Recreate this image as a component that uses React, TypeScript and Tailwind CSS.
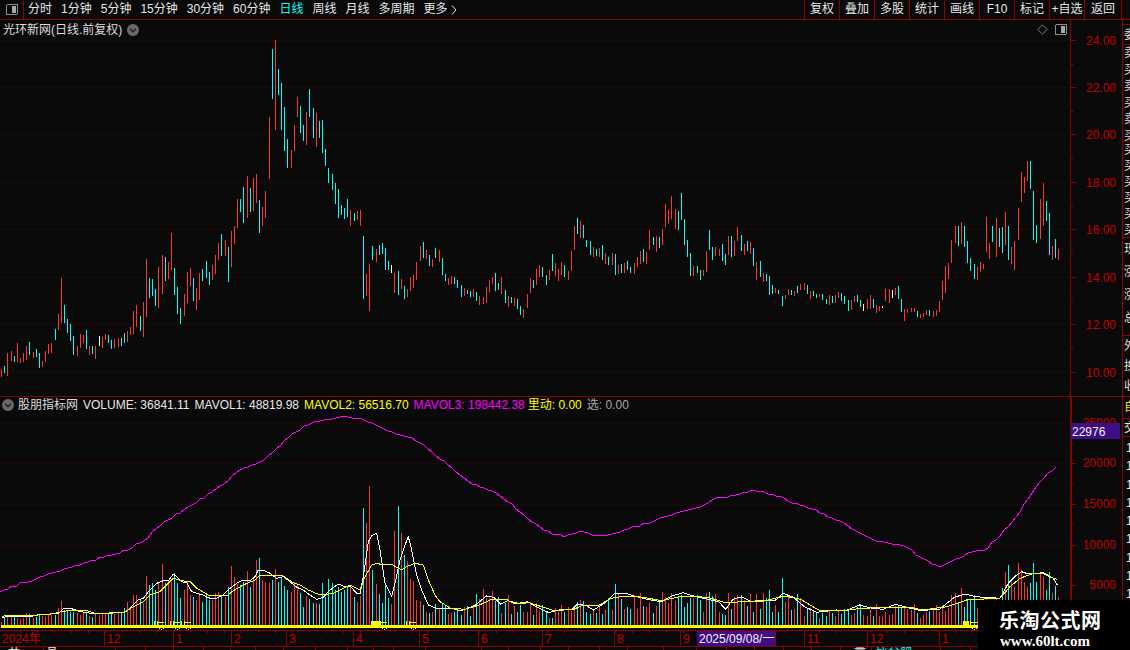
const RED = "#ff3434";
const CYAN = "#00ffff";
const AXIS = "#8c0000";
const LABEL = "#c40000";
const DOT = "#6a0000";

const candleSets: [number, number, string][] = [
  [0, 230, "4 418 441 r;13 408 429 c;22 369 438 r;34 363 393 r;43 378 396 c;52 339 396 r;61 384 399 r;70 369 396 r;79 348 390 r;88 336 375 c;100 366 384 r;109 357 381 c;118 369 414 c;127 393 411 r;136 363 396 r;145 342 372 r;154 339 369 r;166 297 330 c;175 252 300 r;184 144 279 r;193 225 279 c;202 267 309 c;211 282 333 c;220 318 375 c;232 348 378 r;241 312 354 r;250 315 339 r;259 300 357 c;268 348 375 r;277 348 372 c;286 348 387 r;298 318 348 w;307 321 354 r;316 312 330 r;325 315 339 c;334 330 357 c;343 327 354 r;355 324 351 r;364 324 348 c;373 309 339 c;382 303 336 r;391 291 315 r;400 243 312 r;409 225 291 r;421 258 303 c;430 216 321 r;439 87 261 r;448 144 204 c;457 147 198 c;466 177 228 c;475 111 234 r;487 75 192 r;496 81 153 c;505 96 147 r;514 9 120 r;523 114 195 c;532 171 252 c;541 234 282 c;553 192 258 r;562 126 219 r;571 114 168 r;580 144 213 c;589 174 240 r;598 129 210 r;607 117 153 c;619 93 144 c;628 126 165 c;637 105 150 r;646 75 132 r;655 39 90 r;664 12 78 c;676 30 78 r;685 51 156 c;694 3 111 r"],
  [130, 30, "313 588 642 r;322 507 594 r;331 507 546 c;340 471 579 c;352 438 564 r;361 474 546 c;370 444 543 r;379 432 519 r;388 510 609 c;397 531 588 r;406 483 564 r;418 261 447 r;427 57 207 c;436 30 300 r;445 117 195 c;454 159 300 c;463 231 363 c;472 327 414 c;484 360 414 r;493 285 363 r;502 201 261 r;511 228 309 c;520 285 333 c;529 246 345 r;538 177 261 c;550 234 324 c;559 249 351 r;568 273 324 c;577 270 369 c;586 357 408 c;595 414 459 c;607 432 480 c;616 459 522 c;625 477 564 c;634 525 555 c;643 534 567 c;652 507 561 c;661 540 588 r;673 549 573 c;682 543 570 r;691 540 588 r;700 618 807 c;709 732 798 r;718 702 843 r;727 648 690 c;739 657 696 r;748 645 675 c;757 639 672 c;766 654 720 c;775 693 720 c;784 705 729 w;793 729 789 r;805 723 795 c"],
  [400, 190, "4 267 297 r;13 288 327 c;22 297 321 r;31 261 303 r;40 255 294 r;49 216 270 r;61 168 213 r;70 156 204 c;79 180 207 r;88 195 228 c;97 207 231 r;106 174 204 c;118 180 216 r;127 204 255 c;136 252 273 c;145 264 285 r;154 258 282 r;163 261 282 c;172 270 294 c;184 285 321 c;193 294 318 r;202 300 312 c;211 303 321 c;220 297 321 r;229 306 333 c;238 318 345 r;250 321 342 r;259 291 339 r;268 270 306 r;277 261 282 r;286 249 303 c;295 279 300 c;304 261 312 r;316 300 339 c;325 318 351 r;334 321 339 c;343 324 348 r;352 327 357 c;361 348 375 c;370 357 384 r;382 312 354 r;391 264 309 r;400 270 294 c;409 237 285 r;418 225 261 r;427 231 261 c;439 255 285 c;448 240 270 r;457 192 243 c;466 219 258 r;475 237 273 r;484 216 255 r;493 225 261 c;505 243 270 r;514 183 243 r;523 108 180 r;532 84 132 c;541 93 144 r;550 105 144 c;559 150 171 c;571 153 195 c;580 171 201 r;589 177 198 c;598 174 201 r;607 165 210 c;616 189 222 r;625 201 225 c;637 189 225 r;646 192 255 c;655 225 252 r;664 222 249 c;673 219 249 r;682 213 240 c;691 231 249 c;703 219 252 r;712 201 231 r;721 183 222 r;730 177 216 c;739 186 222 r;748 120 180 r;760 141 165 c;769 138 186 r;778 141 174 c;787 117 165 r;796 42 111 r;805 60 102 r;814 18 87 r;826 57 117 r;835 63 120 c;844 9 90 c;853 87 165 c;862 150 201 c;871 189 258 c;880 228 258 r;892 228 249 c;901 240 270 c;910 240 258 r;919 183 246 r;928 120 180 c;937 171 210 c;946 171 198 r;958 177 198 r;967 162 213 c;976 192 225 c;985 138 195 r;994 138 201 c;1003 153 198 r;1012 111 153 r"],
  [740, 150, "4 255 303 c;13 282 315 r;22 273 303 c;31 276 312 r;40 294 348 c;49 336 390 r;61 333 381 c;70 369 396 r;79 372 393 c;88 378 435 c;97 405 432 c;106 414 429 r;115 420 432 c;127 438 468 c;136 435 447 r;145 417 435 r;154 420 435 c;163 423 438 r;172 408 429 c;181 402 420 r;193 399 420 r;202 405 432 c;211 423 447 r;220 423 438 c;229 432 444 c;238 432 441 r;247 432 450 c;259 447 462 c;268 435 465 r;277 438 459 c;286 435 459 r;295 426 444 r;304 429 453 c;313 438 462 c;325 450 483 c;334 450 480 r;343 438 456 r;352 435 456 c;361 450 471 c;370 462 483 w;382 447 477 r;391 435 477 r;400 447 474 c;409 465 489 r;418 468 483 r;427 468 474 w;436 417 453 r;448 417 459 r;457 420 444 w;466 414 435 r;475 408 447 c;484 447 486 c;493 477 513 r;502 477 489 r;514 474 486 r;523 474 486 r;532 483 501 c;541 492 504 r;550 489 501 r;559 480 495 r;568 480 498 c;580 483 501 r;589 480 498 r;598 453 486 r;607 393 450 r;616 348 429 r;625 339 387 r;634 270 339 r;646 228 279 r;655 228 288 c;664 216 282 r;673 228 291 c;682 273 339 c;691 324 363 c;703 342 387 c;712 351 390 r;721 336 366 r;730 342 357 r;739 201 306 r;748 279 327 r;757 228 276 c;769 204 321 r;778 234 291 c;787 231 309 c;796 186 285 r;805 228 330 c;814 291 342 r;823 273 360 r;835 174 270 r;844 66 156 r;853 81 129 r;862 33 93 r;871 33 117 c;880 123 270 c;889 225 279 c;901 147 267 r;910 99 228 r;919 153 213 c;928 189 315 c;937 288 330 r;946 267 324 c;955 297 330 r"],
];

type Bar = { x: number; y1: number; y2: number; c: string };
const bars: Bar[] = candleSets.flatMap(([ox, oy, s]) =>
  s.split(";").map((row) => {
    const [zx, a, b, c] = row.split(" ");
    return { x: ox + Math.floor(+zx / 3), y1: oy + +a / 3, y2: oy + +b / 3, c };
  }),
);

const conv = (pts: number[], ox: number, oy: number, sx = 3, sy = 3) => {
  const out: [number, number][] = [];
  for (let i = 0; i < pts.length; i += 2) out.push([ox + pts[i] / sx, oy + pts[i + 1] / sy]);
  return out;
};

const white = [
  ...conv([5,172,50,168,100,168,120,163,150,162,175,160,190,147,215,146,235,153,260,158,285,161,310,160,370,158,385,150,400,135,415,120,430,115,445,95,470,70,490,62,505,62,520,42,530,50,545,65,560,68,575,95,590,100,610,105,630,115,650,115,670,105,690,85,710,70,730,60,750,62,765,50,775,30,790,30,810,40,830,55,850,50,870,65,890,82,910,90,930,105,950,118,970,112,990,90,1015,72,1035,80], 0, 560),
  ...conv([30,348,50,370,60,372,70,320,85,215,95,197,110,190,120,240,135,340,155,380,165,340,180,270,195,225,205,200,215,240,230,315,245,360,265,405,290,415], 340, 470),
  ...conv([30,145,60,152,100,135,130,108,150,112,170,132,190,122,220,130,245,125,270,140,305,158,340,148,370,148,385,132,410,137,430,150,460,130,490,100,520,100,550,110,590,120,620,125,650,108,680,98,710,108,750,118,780,125,800,148,820,118,845,110,870,125,900,120,940,120,960,100,990,112,1020,140,1055,157,1110,150,1135,152,1175,135,1210,145,1240,148,1275,133,1300,140,1345,152,1400,147,1440,112,1470,102,1500,110], 440, 560, 2.8),
  ...conv([0,655,25,610,50,585,65,575,85,582,110,580,130,578,160,595,172,615], 1000, 380),
];
const yellow = [
  ...conv([5,170,20,166,100,166,150,163,185,155,205,152,260,152,285,160,370,158,400,140,430,125,450,105,480,95,500,75,520,55,545,62,570,65,590,85,625,105,680,108,700,92,730,75,765,60,780,45,845,45,860,55,880,68,900,75,925,90,960,105,1000,100,1020,90], 0, 560),
  ...conv([30,345,60,360,75,320,95,285,110,280,130,285,155,283,175,295,185,300,200,290,225,280,250,285,265,330,285,375,300,395], 340, 470),
  ...conv([30,145,70,148,110,135,140,120,185,118,210,132,250,128,290,142,320,152,375,148,400,135,440,138,480,115,520,108,570,112,620,122,680,108,750,112,800,128,850,125,900,125,965,108,1010,118,1060,150,1130,152,1180,145,1260,142,1320,142,1350,150,1420,140,1480,118,1505,118], 440, 560, 2.8),
  ...conv([0,655,30,620,60,595,100,580,130,580,150,592,172,598], 1000, 380),
];
const magentaKeys: [number, number][] = [[0,592],[20,584],[40,578],[60,570],[75,566],[100,558],[130,549],[145,540],[160,525],[180,512],[200,500],[220,487],[240,470],[265,460],[285,440],[305,425],[325,419],[345,417],[365,420],[385,430],[410,437],[430,450],[450,467],[470,483],[490,490],[510,503],[530,520],[550,533],[565,536],[580,530],[590,534],[610,535],[630,528],[650,522],[680,512],[700,507],[715,499],[730,496],[755,490],[775,495],[800,505],[820,512],[840,522],[860,532],[880,542],[905,546],[925,560],[940,567],[955,560],[970,552],[985,550],[1000,535],[1010,524],[1017,517],[1025,503],[1033,491],[1043,478],[1050,472],[1057,465]];

const pl = (p: [number, number][]) => p.map(([x, y]) => `${x.toFixed(1)},${y.toFixed(1)}`).join(" ");
const interp = (p: [number, number][], x: number) => {
  for (let i = 1; i < p.length; i++) {
    if (p[i][0] >= x) {
      const [a, b] = p[i - 1];
      const [c, d] = p[i];
      return b + ((d - b) * (x - a)) / (c - a || 1);
    }
  }
  return p[p.length - 1][1];
};

const vols = new Map<number, number>();
const addV = (pts: number[], ox: number, oy: number, sx = 3, sy = 3) => {
  for (let i = 0; i < pts.length; i += 2) vols.set(ox + Math.floor(pts[i] / sx), oy + pts[i + 1] / sy);
};
addV([13,175,22,170,34,168,43,170,52,175,61,177,70,175,79,160,88,163,100,175,109,170,118,162,127,168,136,172,145,165,154,165,166,165,175,145,184,123,193,150,202,152,211,155,220,155,232,160,241,165,250,158,259,155,268,168,277,172,286,162,298,165,307,160,316,160,325,160,334,162,343,163,355,160,364,155,373,145,382,125,391,140,400,105,409,105,421,118,430,130,439,48,448,75,457,70,466,90,475,65,487,12,496,70,505,60,514,65,523,40,532,70,541,115,553,90,562,65,571,105,580,110,589,120,598,100,607,125,619,100,628,120,637,120,646,100,655,95,664,105,676,110,685,80,694,18,703,50,712,72,721,75,730,65,742,32,751,80,760,55,769,0,778,-6,787,60,796,65,805,70,817,60,826,28,835,65,844,50,853,78,862,90,874,95,883,65,892,75,901,100,910,140,919,108,928,118,940,130,949,130,958,132,967,68,976,112,985,58,994,70,1003,90,1015,80,1024,95,1033,90,1042,80,1051,75], 0, 560);
addV([42,380,52,395,61,378,70,115,79,160,88,48,97,300,109,342,118,372,127,400,136,345,145,385,154,402,163,183,175,108,184,190,193,255,202,272,211,328,220,332,229,390,241,393,250,405,259,425,268,430,277,425,286,402,295,418,307,402,316,408,325,432,334,428,343,425,352,420], 340, 470);
addV([5,625,15,575,25,555,35,600,45,620,55,548,65,570,72,605,80,620,90,610,100,548,110,605,120,575,130,590,138,630,148,575,157,640,175,650], 1000, 380);
addV([101,102,121,87,491,72,622,97,805,100,922,90,958,55,1440,100,1460,84], 440, 560, 2.8);

let seed = 17;
const rnd = () => {
  seed = (seed * 16807) % 2147483647;
  return seed / 2147483647;
};
const volumes = bars.map((b) => {
  const known = vols.get(b.x) ?? vols.get(b.x - 1) ?? vols.get(b.x + 1);
  const level = 626 - interp(white, b.x);
  return {
    x: b.x,
    top: known ?? 626 - level * (0.5 + rnd() * 0.8),
    color: b.c === "c" ? CYAN : RED,
  };
});

const magenta: [number, number][] = [];
for (let x = 0; x <= 1057; x += 4) {
  magenta.push([x, Math.round(interp(magentaKeys, x) + (rnd() - 0.5) * 2)]);
}

const priceLabels: [string, number][] = [["24.00", 40], ["22.00", 87], ["20.00", 134.5], ["18.00", 182], ["16.00", 229], ["14.00", 277], ["12.00", 324.5], ["10.00", 372]];
const volLabels: [string, number][] = [["25000", 423], ["20000", 463.5], ["15000", 504.5], ["10000", 545], ["5000", 585.5]];
const barColor = (c: string) => (c === "r" ? RED : c === "c" ? CYAN : "#ffffff");

function SplitIcon({ className }: { className: string }) {
  return (
    <svg viewBox="0 0 12 11" className={className} shapeRendering="crispEdges">
      <rect x="0.5" y="0.5" width="11" height="10" rx="1.5" fill="#0a0a0a" stroke="#8e8e8e" />
      <rect x="6" y="2" width="4" height="7" fill="#a8a8a8" />
    </svg>
  );
}

function Chevron({ className }: { className: string }) {
  return (
    <svg viewBox="0 0 12 12" className={className}>
      <circle cx="6" cy="6" r="6" fill="#6a6a6a" />
      <path d="M3 4.8 6 7.8 9 4.8" fill="none" stroke="#1b1b1b" strokeWidth="1.3" />
    </svg>
  );
}

function PriceChart() {
  return (
    <svg viewBox="0 20 1122 376" className="block w-[1122px] h-[376px]">
      {priceLabels.map(([, y]) => (
        <line key={y} x1="1" x2="1067" y1={Math.floor(y) + 0.5} y2={Math.floor(y) + 0.5} stroke={DOT} strokeDasharray="1 3" />
      ))}
      <g shapeRendering="crispEdges">
        {bars.map((b, i) => (
          <rect key={i} x={b.x} y={Math.round(b.y1)} width="1" height={Math.max(2, Math.round(b.y2 - b.y1))} fill={barColor(b.c)} />
        ))}
        <rect x="1070" y="20" width="1" height="376" fill={AXIS} />
        {priceLabels.map(([, y]) => (
          <g key={y}>
            <rect x="1070" y={Math.floor(y)} width="6" height="1" fill={AXIS} />
            <rect x="1070" y={Math.floor(y) + 24} width="3" height="1" fill={AXIS} />
          </g>
        ))}
      </g>
      {priceLabels.map(([t, y]) => (
        <text key={t} x="1116" y={y + 4.5} textAnchor="end" fontSize="12" fill={LABEL}>{t}</text>
      ))}
    </svg>
  );
}

function Signal({ x, n }: { x: number; n: number }) {
  const marks = [];
  for (let i = 0; i < n; i++) {
    const sx = x + i * 11;
    marks.push(
      <g key={i}>
        <rect x={sx} y="621" width="1" height="7" />
        <rect x={sx + 3} y="621" width="1" height="7" />
        <rect x={sx + 4} y="622" width="6" height="1" />
        <rect x={sx + 5} y="628" width="1" height="1" />
        <rect x={sx + 7} y="629" width="1" height="1" />
        <rect x={sx + 9} y="628" width="1" height="1" />
      </g>,
    );
  }
  return <g>{marks}</g>;
}

function VolumeChart() {
  return (
    <svg viewBox="0 397 1122 233" className="block w-[1122px] h-[233px]">
      {volLabels.map(([, y]) => (
        <line key={y} x1="1" x2="1067" y1={Math.floor(y) + 0.5} y2={Math.floor(y) + 0.5} stroke={DOT} strokeDasharray="1 3" />
      ))}
      <g shapeRendering="crispEdges">
        {volumes.map((v, i) => (
          <rect key={i} x={v.x} y={Math.round(v.top)} width="1" height={627 - Math.round(v.top)} fill={v.color} />
        ))}
      </g>
      <polyline points={pl(magenta)} fill="none" stroke="#ff00ff" strokeWidth="1" shapeRendering="crispEdges" />
      <polyline points={pl(white)} fill="none" stroke="#ffffff" strokeWidth="1" shapeRendering="crispEdges" />
      <polyline points={pl(yellow)} fill="none" stroke="#ffff00" strokeWidth="1" shapeRendering="crispEdges" />
      <g shapeRendering="crispEdges" fill="#ffff00">
        <rect x="1" y="625" width="1068" height="3" />
        <Signal x={154} n={1} />
        <Signal x={170} n={2} />
        <rect x="371" y="621" width="9" height="7" />
        <Signal x={377} n={1} />
        <Signal x={406} n={1} />
        <rect x="963" y="621" width="6" height="7" />
        <Signal x={967} n={1} />
      </g>
      <g shapeRendering="crispEdges">
        <rect x="1070" y="397" width="2" height="233" fill={AXIS} />
        {volLabels.map(([, y]) => (
          <g key={y}>
            <rect x="1070" y={Math.floor(y)} width="6" height="1" fill={AXIS} />
            <rect x="1070" y={Math.floor(y) + 20} width="3" height="1" fill={AXIS} />
          </g>
        ))}
      </g>
      {volLabels.map(([t, y]) => (
        <text key={t} x="1116" y={y + 3.5} textAnchor="end" fontSize="12" fill={LABEL}>{t}</text>
      ))}
      <rect x="1071" y="423" width="49" height="16" fill="#3f0d85" shapeRendering="crispEdges" />
      <text x="1072" y="435.5" fontSize="12" fill="#f2f2f2">22976</text>
    </svg>
  );
}

const dateCells = [
  { t: "2024年", w: "w-[104px]" },
  { t: "12", w: "w-[69px]" },
  { t: "1", w: "w-[58px]" },
  { t: "2", w: "w-[55px]" },
  { t: "3", w: "w-[67px]" },
  { t: "4", w: "w-[66px]" },
  { t: "5", w: "w-[59px]" },
  { t: "6", w: "w-[64px]" },
  { t: "7", w: "w-[72px]" },
  { t: "8", w: "w-[66px]" },
  { t: "9", w: "w-[17px]" },
];
const dateCellsAfter = [
  { t: "", w: "w-[29px]" },
  { t: "11", w: "w-[63px]" },
  { t: "12", w: "w-[72px]" },
  { t: "1", w: "w-[131px]" },
];
const lowerTicks = [43,115,145,173,203,230,255,283,315,347,373,393,425,481,508,540,568,599,627,663,696,726,754,783,811,840,871,905,940,970];
const upperTicks = Array.from({ length: 62 }, (_, i) => 20 + i * 17);

function DateAxis() {
  const cell = (c: { t: string; w: string }, i: number) => (
    <div key={i} className={`${c.w} shrink-0 h-full border-l border-[#8c0000] pl-[2px] first:border-l-0 text-[#c40000] leading-[16px]`}>
      {c.t}
    </div>
  );
  return (
    <div className="relative h-[17px] w-[1070px] flex border-t border-b border-[#8c0000]">
      {dateCells.map(cell)}
      <div className="w-[78px] shrink-0 h-full bg-[#3f0d85] text-[#f2f2f2] leading-[16px] pl-[2px] whitespace-nowrap">2025/09/08/一</div>
      {dateCellsAfter.map(cell)}
      <svg viewBox="0 0 1070 4" className="absolute left-0 top-0 w-[1070px] h-[4px]" shapeRendering="crispEdges">
        {upperTicks.map((x) => (
          <rect key={x} x={x} y="0" width="1" height="2" fill={AXIS} />
        ))}
      </svg>
    </div>
  );
}

const stripCells = [
  { h: "h-[5px]", rows: [] as string[], lh: "leading-[16px]" },
  { h: "h-[20px]", rows: ["委"], lh: "leading-[20px]" },
  { h: "h-[97px]", rows: ["卖", "买", "卖", "买", "卖", "买"], lh: "leading-[16.5px]" },
  { h: "h-[96px]", rows: ["买", "买", "买", "买", "买", "买"], lh: "leading-[16px]" },
  { h: "h-[98px]", rows: ["现", "涨", "涨", "总"], lh: "leading-[23px]" },
  { h: "h-[61px]", rows: ["外", "换", "收"], lh: "leading-[20px]" },
];

function RightStrip() {
  return (
    <div className="w-[8px] h-[630px] border-l border-[#8c0000] overflow-hidden">
      {stripCells.map((c, i) => (
        <div key={i} className={`${c.h} border-b border-[#8c0000] overflow-hidden pl-[1px] text-[#dddddd] ${c.lh} whitespace-nowrap`}>
          {c.rows.map((r, j) => (
            <div key={j}>{r}</div>
          ))}
        </div>
      ))}
      <div className="h-[22px] border-b border-[#8c0000] pl-[1px] pt-[2px] text-[#e8e800] leading-[16px] whitespace-nowrap overflow-hidden">自</div>
      <div className="h-[18px] border-b border-[#8c0000] pl-[1px] text-[#e8e8e8] leading-[18px] whitespace-nowrap overflow-hidden">交</div>
      <div className="pl-[3px] pt-[2px] text-[#e8e8e8] leading-[18.3px] flex flex-col">
        {Array.from({ length: 10 }, (_, i) => (
          <span key={i}>1</span>
        ))}
      </div>
    </div>
  );
}

const leftTabs = ["分时", "1分钟", "5分钟", "15分钟", "30分钟", "60分钟", "日线", "周线", "月线", "多周期"];
const rightTabs = ["复权", "叠加", "多股", "统计", "画线", "F10", "标记", "+自选"];

export default function App() {
  return (
    <div className="relative w-[1130px] h-[650px] overflow-hidden bg-[#0a0a0a] text-[12px] text-[#e6e6e6] font-['Liberation_Sans','Noto_Sans_CJK_SC',sans-serif]">
      <header className="h-[20px] flex items-stretch border-b border-[#8c0000] leading-[19px]">
        <div className="w-[24px] border-r border-[#8c0000] flex items-center justify-center">
          <SplitIcon className="w-[12px] h-[11px]" />
        </div>
        <nav className="flex gap-[9px] pl-[4px] whitespace-nowrap">
          {leftTabs.map((t) => (
            <span key={t} className={t === "日线" ? "text-[#00ffff]" : ""}>{t}</span>
          ))}
          <span className="flex items-center gap-[3px]">
            更多
            <svg viewBox="0 0 6 10" className="w-[6px] h-[10px]">
              <path d="M1 .5 5 5 1 9.5" fill="none" stroke="#e6e6e6" />
            </svg>
          </span>
        </nav>
        <div className="ml-auto flex">
          {rightTabs.map((t) => (
            <span key={t} className="w-[35px] border-l border-[#8c0000] text-center">{t}</span>
          ))}
          <span className="w-[38px] border-x border-[#8c0000] text-center">返回</span>
          <span className="w-[8px]" />
        </div>
      </header>

      <div className="flex">
        <main className="w-[1122px]">
          <section className="relative h-[377px] border-b border-[#8c0000]">
            <PriceChart />
            <div className="absolute left-[3px] top-[1px] flex items-center gap-[5px] leading-[18px] text-[#dcdcdc]">
              <span>光环新网(日线.前复权)</span>
              <Chevron className="w-[12px] h-[12px]" />
            </div>
            <div className="absolute left-[1037px] top-[4px] flex items-center gap-[7px]">
              <svg viewBox="0 0 11 11" className="w-[11px] h-[11px]">
                <path d="M5.5.8 10.2 5.5 5.5 10.2.8 5.5Z" fill="none" stroke="#7a7a7a" />
              </svg>
              <SplitIcon className="w-[12px] h-[11px]" />
            </div>
          </section>
          <section className="relative h-[233px]">
            <VolumeChart />
            <div className="absolute left-[2px] top-0 flex items-center leading-[16px] whitespace-nowrap">
              <Chevron className="w-[12px] h-[12px] mr-[4px]" />
              <span className="text-[#dcdcdc] mr-[5px]">股朋指标网</span>
              <span className="text-[#e8e8e8] mr-[5px]">VOLUME: 36841.11</span>
              <span className="text-[#e8e8e8] mr-[5px]">MAVOL1: 48819.98</span>
              <span className="text-[#ffff00] mr-[5px]">MAVOL2: 56516.70</span>
              <span className="text-[#ff00ff] mr-[3px]">MAVOL3: 198442.38</span>
              <span className="text-[#ffff00] mr-[5px]">里动: 0.00</span>
              <span className="text-[#a8a8a8]">选: 0.00</span>
            </div>
          </section>
          <DateAxis />
          <div className="relative h-[3px] w-[1122px] overflow-hidden leading-[12px]">
            <svg viewBox="0 0 1122 3" className="absolute left-0 top-0 w-[1122px] h-[3px]" shapeRendering="crispEdges">
              {lowerTicks.map((x) => (
                <rect key={x} x={x} y="0" width="1" height="3" fill={AXIS} />
              ))}
            </svg>
            <div className="flex gap-[26px] pl-[8px] text-[#e8e8e8] whitespace-nowrap -mt-[2px]">
              <span>开</span>
              <span>高</span>
              <span className="ml-[770px]">量</span>
              <span className="text-[#00ffff] -ml-[16px]">成交额</span>
            </div>
          </div>
        </main>
        <RightStrip />
      </div>

      <aside className="absolute right-0 bottom-0 w-[152px] h-[50px] bg-black pl-[21px] text-white whitespace-nowrap">
        <div className="text-[20px] leading-[26px] pt-[7px] h-[33px] font-bold font-['Noto_Sans_CJK_SC',sans-serif] tracking-[0.5px]">乐淘公式网</div>
        <div className="text-[15px] leading-[17px] font-bold pl-[1px] font-['Liberation_Serif',serif]">www.60lt.com</div>
      </aside>
    </div>
  );
}
